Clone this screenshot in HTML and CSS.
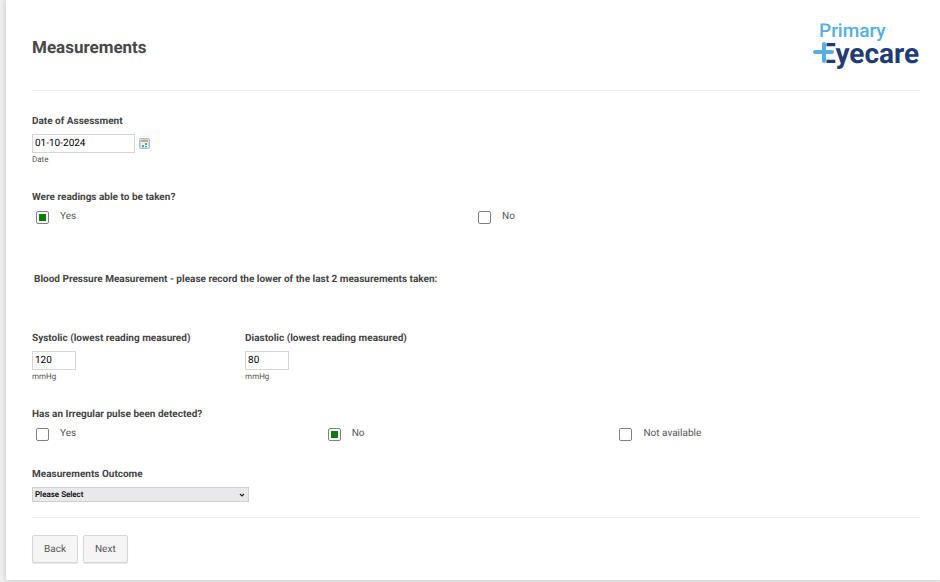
FILE: index.html
```html
<!DOCTYPE html>
<html lang="en">
<head>
    <meta charset="UTF-8">
    <meta name="viewport" content="width=device-width, initial-scale=1">
    <title>Measurements</title>
    <link rel="stylesheet" href="styles.css">
</head>
<body>
    <form class="card">
        <header class="head">
            <h1 class="title">Measurements</h1>
            <svg class="logo" width="108" height="54" viewBox="0 0 108 54" role="img" aria-label="Primary Eyecare">
                <text class="logo_top" x="7" y="19">Primary</text>
                <text class="logo_bottom" x="8" y="45">Eyecare</text>
                <path d="M11 23v23" fill="none" stroke="#fff" stroke-width="7"/>
                <path d="M14 34.500h9" fill="none" stroke="#fff" stroke-width="7"/>
                <path d="M12 26v17M3 34h17" fill="none" stroke="#55aee5" stroke-width="4" stroke-linecap="round"/>
            </svg>
        </header>

        <div class="field">
            <label class="label" for="date">Date of Assessment</label>
            <div class="date_row">
                <input class="text date" id="date" type="text" value="01-10-2024">
                <button class="calendar" type="button" aria-label="Pick a date">
                    <svg width="11" height="11" viewBox="0 0 11 11">
                        <rect x=".5" y=".5" width="10" height="10" rx="1" fill="#c5dcf5" stroke="#9dbde6"/>
                        <path d="M2 4h7v5H2z" fill="#e6f0fa"/>
                        <path d="M2 2h7v2H2z" fill="#f39a58"/>
                        <path d="M3 7h2v2H3zM6 5h2v2H6zM6 8h2v1H6z" fill="#58ae68"/>
                        <path d="M8 7l2 2H8z" fill="#fff"/>
                    </svg>
                </button>
            </div>
            <div class="hint">Date</div>
        </div>

        <fieldset class="field">
            <legend class="label">Were readings able to be taken?</legend>
            <div class="options two">
                <label class="option"><input type="radio" name="readings" checked>Yes</label>
                <label class="option"><input type="radio" name="readings">No</label>
            </div>
        </fieldset>

        <h2 class="section_title">Blood Pressure Measurement - please record the lower of the last 2 measurements taken:</h2>

        <div class="field readings">
            <div>
                <label class="label" for="systolic">Systolic (lowest reading measured)</label>
                <input class="text number" id="systolic" type="text" value="120">
                <div class="hint">mmHg</div>
            </div>
            <div>
                <label class="label" for="diastolic">Diastolic (lowest reading measured)</label>
                <input class="text number" id="diastolic" type="text" value="80">
                <div class="hint">mmHg</div>
            </div>
        </div>

        <fieldset class="field">
            <legend class="label">Has an Irregular pulse been detected?</legend>
            <div class="options three">
                <label class="option"><input type="radio" name="pulse">Yes</label>
                <label class="option"><input type="radio" name="pulse" checked>No</label>
                <label class="option"><input type="radio" name="pulse">Not available</label>
            </div>
        </fieldset>

        <div class="field outcome">
            <label class="label" for="outcome">Measurements Outcome</label>
            <div class="select_wrap">
                <select id="outcome">
                    <option>Please Select</option>
                </select>
                <svg class="arrow" width="6" height="4" viewBox="0 0 6 4"><path d="M1 1l2 2 2-2" fill="none" stroke="#222" stroke-width="1.2"/></svg>
            </div>
        </div>

        <footer class="buttons">
            <button class="button" type="button">Back</button>
            <button class="button" type="button">Next</button>
        </footer>
    </form>
</body>
</html>
```
FILE: styles.css
```css
* {
    box-sizing: border-box;
}
body {
    margin: 0;
    background-color: #f0f0f0;
    font-family: Roboto, "Liberation Sans", sans-serif;
    font-size: 10px;
    line-height: 16px;
    color: #555;
    text-rendering: geometricPrecision;
}
input, select, button {
    font-family: inherit;
    font-size: 10px;
    text-rendering: inherit;
}
.card {
    margin: 0 0 2px 6px;
    padding: 0 20px 17px 26px;
    background-color: #fff;
    box-shadow: 0 0 6px rgba(0, 0, 0, 0.2);
}
.head {
    display: flex;
    justify-content: space-between;
    align-items: center;
    height: 91px;
    margin-bottom: 23px;
    border-bottom: 1px solid #eee;
}
.title {
    margin: 6px 0 0;
    font-size: 17px;
    line-height: 24px;
    color: #484848;
}
.logo_top {
    font: 500 19px Roboto, sans-serif;
    fill: #55aee5;
}
.logo_bottom {
    font: 700 28px Roboto, sans-serif;
    fill: #1f3c75;
}
.field {
    margin: 0 0 24px;
    padding: 0;
    border: 0;
    min-width: 0;
}
.label {
    display: block;
    padding: 0;
    font-weight: bold;
    color: #444;
}
.text {
    display: block;
    height: 19px;
    margin-top: 4px;
    padding: 0 2px;
    border: 1px solid #d5d5d5;
    background-color: #fff;
    color: #000;
}
.date_row {
    display: flex;
    align-items: flex-end;
    gap: 4px;
}
.date {
    width: 103px;
}
.calendar {
    display: flex;
    padding: 0;
    margin-bottom: 4px;
    border: 0;
    background: none;
}
.number {
    width: 44px;
}
.hint {
    font-size: 8px;
    line-height: 13px;
}
.options {
    display: grid;
    padding: 2px 0 0 4px;
}
.two {
    grid-template-columns: 1fr 1fr;
}
.three {
    grid-template-columns: 33% 33% 33%;
}
.option {
    display: flex;
    align-items: center;
    gap: 11px;
    height: 18px;
}
.option input {
    appearance: none;
    width: 13px;
    height: 13px;
    margin: 0;
    border: 1px solid #808080;
    border-radius: 2px;
    background-color: #fff;
}
.option input:checked {
    padding: 2px;
    background-color: #0b7d0b;
    background-clip: content-box;
}
.section_title {
    margin: 46px 0 43px 2px;
    font-size: 10px;
    line-height: 16px;
    color: #444;
}
.readings {
    display: grid;
    grid-template-columns: 24% 24%;
}
.outcome {
    margin-bottom: 0;
    padding-bottom: 15px;
    border-bottom: 1px solid #eee;
}
.select_wrap {
    display: flex;
    align-items: center;
    position: relative;
    width: 217px;
    margin-top: 4px;
}
.select_wrap select {
    appearance: none;
    width: 100%;
    height: 15px;
    padding: 0 2px;
    border: 1px solid #d0d0d4;
    border-radius: 0;
    background-color: #e8e8ed;
    font-size: 8px;
    font-weight: 500;
    color: #000;
}
.arrow {
    position: absolute;
    right: 4px;
    pointer-events: none;
}
.buttons {
    display: flex;
    gap: 5px;
    padding-top: 17px;
}
.button {
    height: 28px;
    padding: 0 11px;
    border: 1px solid #d8d8d8;
    border-radius: 2px;
    background-color: #f5f5f5;
    box-shadow: 0 1px 1px rgba(0, 0, 0, 0.1);
    color: #555;
}
```
